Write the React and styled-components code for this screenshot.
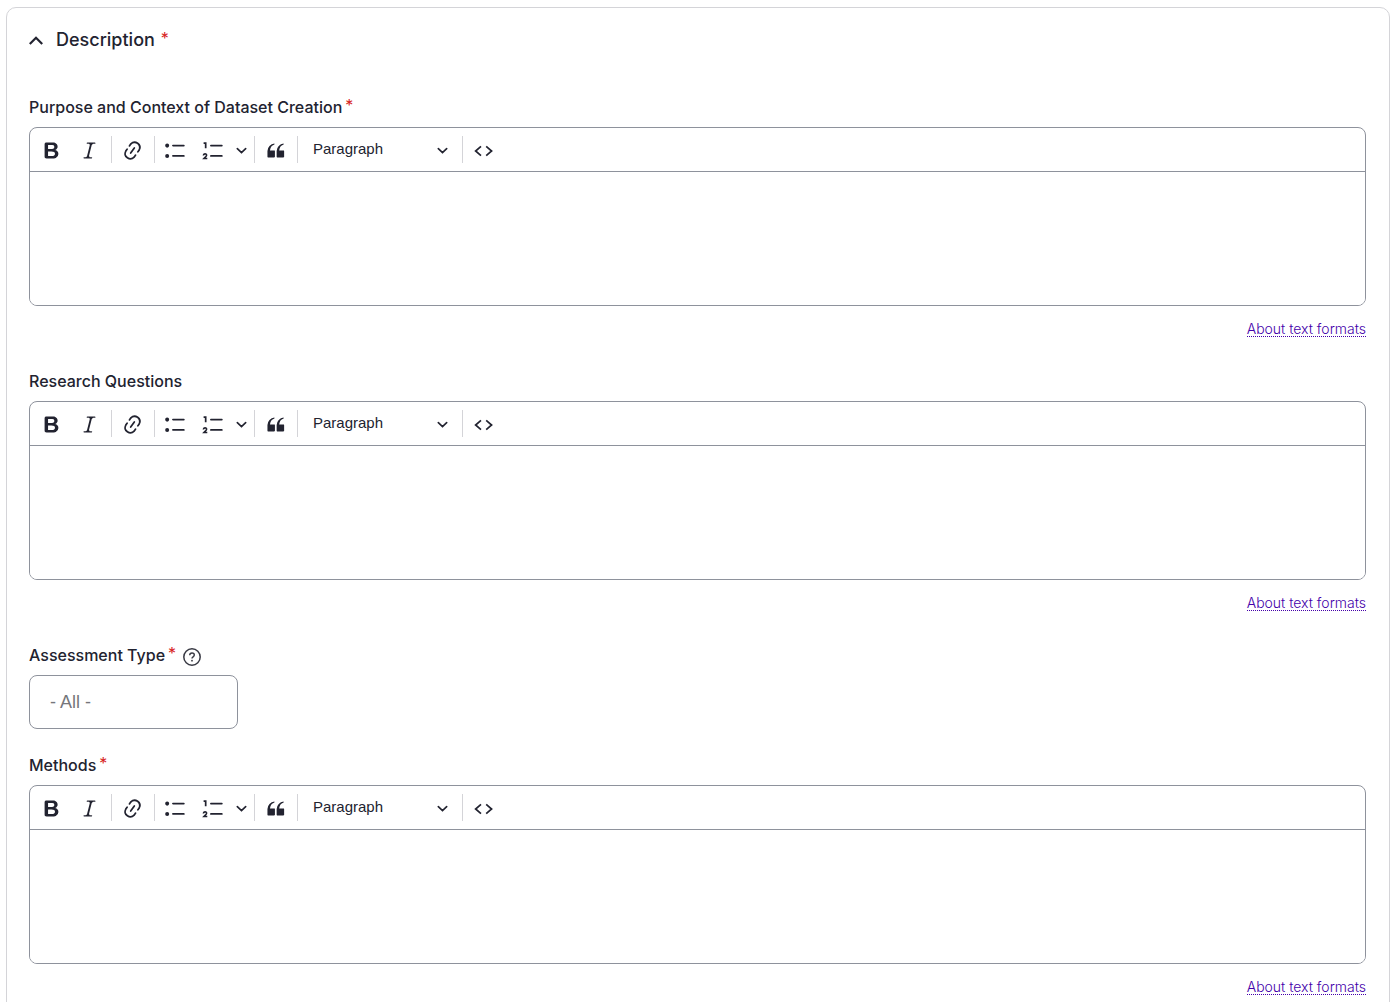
import React, { useId, useState } from "react";
import styled, { createGlobalStyle } from "styled-components";

const GlobalStyle = createGlobalStyle`
  * {
    box-sizing: border-box;
  }

  body {
    margin: 0;
    background-color: #fff;
    color: #222330;
    font-family: Inter, "Liberation Sans", sans-serif;
    font-size: 16px;
  }
`;

const Page = styled.main`
  padding: 7px 6px 24px;
`;

const Card = styled.section`
  border: 1px solid #d4d4d8;
  border-radius: 10px;
  padding: 20px 23px 24px 22px;
`;

const Summary = styled.button`
  display: flex;
  align-items: center;
  gap: 12px;
  padding: 0;
  border: 0;
  background: none;
  color: inherit;
  font-family: inherit;
  font-size: 18px;
  font-weight: 500;
  line-height: 24px;
  cursor: pointer;
`;

const Fields = styled.div`
  display: flex;
  flex-direction: column;
  gap: 24px;
  padding-top: 43px;
`;

const Field = styled.div`
  display: flex;
  flex-direction: column;
`;

const LabelRow = styled.div`
  display: flex;
  align-items: center;
  gap: 6px;
  height: 24px;
  margin-bottom: 8px;
`;

const Label = styled.label`
  font-weight: 500;
  line-height: 24px;
`;

const Required = styled.span`
  margin-left: ${(props) => (props.$wide ? "6px" : "3px")};
  color: #d72222;
  font-size: 16px;
  font-weight: 400;
  line-height: 16px;
  vertical-align: 2px;
`;

const HelpButton = styled.button`
  display: flex;
  padding: 4px 0 0;
  border: 0;
  background: none;
  color: #393a44;
`;

const EditorBox = styled.div`
  border: 1px solid #8e929c;
  border-radius: 8px;
  overflow: hidden;
`;

const Toolbar = styled.div`
  display: flex;
  align-items: center;
  height: 44px;
  padding: 0 2px;
  border-bottom: 1px solid #8e929c;
`;

const ToolButton = styled.button`
  display: flex;
  align-items: center;
  justify-content: center;
  width: ${(props) => (props.$narrow ? "19px" : "38px")};
  height: 38px;
  padding: 2px 0 0;
  border: 0;
  background: none;
  color: #222330;
`;

const Separator = styled.span`
  width: 1px;
  height: 27px;
  margin: 0 1px 0 3px;
  background-color: #d4d4d8;
`;

const StylePicker = styled.div`
  display: grid;
  align-items: center;
  width: 160px;

  select,
  svg {
    grid-area: 1 / 1;
  }

  svg {
    justify-self: end;
    margin: 2px 11px 0 0;
    pointer-events: none;
  }
`;

const StyleSelect = styled.select`
  appearance: none;
  height: 36px;
  padding: 0 32px 2px 14px;
  border: 0;
  background: none;
  color: #222330;
  font-family: "Liberation Sans", Arial, sans-serif;
  font-size: 15px;
`;

const TextArea = styled.textarea`
  display: block;
  width: 100%;
  height: 133px;
  padding: 12px 16px;
  border: 0;
  outline: 0;
  resize: none;
  color: inherit;
  font: inherit;
`;

const FormatLink = styled.a`
  align-self: flex-end;
  margin: 16px 0 8px;
  border-bottom: 1px dotted currentColor;
  color: #4400aa;
  font-size: 14px;
  font-weight: 300;
  line-height: 14px;
  text-decoration: none;
`;

const TypeInput = styled.input`
  width: 209px;
  height: 54px;
  padding: 0 20px;
  border: 1px solid #8e929c;
  border-radius: 8px;
  color: inherit;
  font-family: "Liberation Sans", Arial, sans-serif;
  font-size: 18px;

  &::placeholder {
    color: #75767b;
    opacity: 1;
  }
`;

const icons = {
  bold: "M10.187 17H5.773c-.637 0-1.092-.138-1.364-.415-.273-.277-.409-.718-.409-1.323V4.738c0-.617.14-1.062.419-1.332.279-.27.73-.406 1.354-.406h4.68c.69 0 1.288.041 1.793.124.506.083.96.242 1.36.478.341.197.644.447.906.75a3.262 3.262 0 0 1 .808 2.162c0 1.401-.722 2.426-2.167 3.075C15.05 10.175 16 11.315 16 13.01a3.756 3.756 0 0 1-2.296 3.504 6.1 6.1 0 0 1-1.517.377c-.571.073-1.238.11-2 .11zm-.217-6.217H7v4.087h3.069c1.977 0 2.965-.69 2.965-2.072 0-.707-.256-1.22-.768-1.537-.512-.319-1.277-.478-2.296-.478zM7 5.13v3.619h2.606c.729 0 1.292-.067 1.69-.2a1.6 1.6 0 0 0 .91-.765c.165-.267.247-.566.247-.897 0-.707-.26-1.176-.778-1.409-.519-.232-1.31-.348-2.375-.348H7z",
  italic:
    "m9.586 14.633.021.004c-.036.335.095.655.393.962.082.083.173.15.274.201h1.474a.6.6 0 1 1 0 1.2H5.304a.6.6 0 0 1 0-1.2h1.15c.474-.07.809-.182 1.005-.334.157-.122.291-.32.404-.597l2.416-9.55a1.053 1.053 0 0 0-.281-.823 1.12 1.12 0 0 0-.442-.296H8.15a.6.6 0 0 1 0-1.2h6.443a.6.6 0 1 1 0 1.2h-1.195c-.376.056-.65.155-.823.296-.215.175-.423.439-.623.79l-2.366 9.347z",
  link: "m11.077 15 .991-1.416a.75.75 0 1 1 1.229.86l-1.148 1.64a.748.748 0 0 1-.217.206 5.251 5.251 0 0 1-8.503-5.955.741.741 0 0 1 .12-.274l1.147-1.639a.75.75 0 1 1 1.228.86L4.933 10.7l.006.003a3.75 3.75 0 0 0 6.132 4.294l.006.004zm5.494-5.335a.748.748 0 0 1-.12.274l-1.147 1.639a.75.75 0 1 1-1.228-.86l.86-1.23a3.75 3.75 0 0 0-6.144-4.301l-.86 1.229a.75.75 0 0 1-1.229-.86l1.148-1.64a.748.748 0 0 1 .217-.206 5.251 5.251 0 0 1 8.503 5.955zm-4.563-2.532a.75.75 0 0 1 .184 1.045l-3.155 4.505a.75.75 0 1 1-1.229-.86l3.155-4.506a.75.75 0 0 1 1.045-.184z",
  bulleted:
    "M7 5.75c0 .414.336.75.75.75h9.5a.75.75 0 1 0 0-1.5h-9.5a.75.75 0 0 0-.75.75zM1 5.75a1.75 1.75 0 1 1 3.5 0 1.75 1.75 0 0 1-3.5 0zM7 14.75c0 .414.336.75.75.75h9.5a.75.75 0 1 0 0-1.5h-9.5a.75.75 0 0 0-.75.75zM1 14.75a1.75 1.75 0 1 1 3.5 0 1.75 1.75 0 0 1-3.5 0z",
  quote:
    "M3 10.423a6.5 6.5 0 0 1 6.056-6.408l.038.67C6.448 5.423 5.354 7.663 5.22 10H9c.552 0 .5.432.5.986v4.511c0 .554-.448.503-1 .503h-5c-.552 0-.5-.449-.5-1.003v-4.574zm8 0a6.5 6.5 0 0 1 6.056-6.408l.038.67c-2.646.739-3.74 2.979-3.873 5.315H17c.552 0 .5.432.5.986v4.511c0 .554-.448.503-1 .503h-5c-.552 0-.5-.449-.5-1.003v-4.574z",
};

const ToolIcon = ({ name }) => (
  <svg width="23" height="23" viewBox="0 0 20 20" aria-hidden="true">
    <path d={icons[name]} fill="currentColor" />
  </svg>
);

const NumberedIcon = () => (
  <svg width="23" height="23" viewBox="0 0 20 20" aria-hidden="true">
    <g fill="none" stroke="currentColor" strokeWidth="1.5">
      <path d="M7.75 5.75h9.5M7.75 14.75h9.5" strokeLinecap="round" />
      <path d="M1.4 3.6h1.8v4.4" />
      <path
        d="M1.2 14.3c0-1.8 2.8-1.8 2.8-.2 0 .8-.9 1.5-2.2 2.8h2.8"
        strokeWidth="1.4"
      />
    </g>
  </svg>
);

const Caret = () => (
  <svg width="11" height="11" viewBox="0 0 10 10" aria-hidden="true">
    <path
      d="M1.2 3.3 5 7l3.8-3.7"
      fill="none"
      stroke="currentColor"
      strokeWidth="1.5"
      strokeLinecap="round"
    />
  </svg>
);

const SourceIcon = () => (
  <svg width="20" height="20" viewBox="0 0 20 20" aria-hidden="true">
    <path
      d="M8 5.4 2.600 10 8 14.600M13.200 5.400l5.400 4.600-5.400 4.600"
      fill="none"
      stroke="currentColor"
      strokeWidth="1.7"
    />
  </svg>
);

const ChevronIcon = ({ open }) => (
  <svg width="15" height="24" viewBox="0 0 15 24" aria-hidden="true">
    <path
      d={open ? "M.8 16 7 9.8l6.2 6.2" : "M.8 9.8 7 16l6.2-6.2"}
      fill="none"
      stroke="currentColor"
      strokeWidth="2.2"
    />
  </svg>
);

const HelpIcon = () => (
  <svg width="20" height="20" viewBox="0 0 20 20" aria-hidden="true">
    <circle cx="10" cy="10" r="8.2" fill="none" stroke="currentColor" strokeWidth="1.5" />
    <path
      d="M7.7 8.2c0-1.3 1-2.2 2.3-2.2s2.3.9 2.3 2.1c0 1.7-2.3 1.7-2.3 3.3"
      fill="none"
      stroke="currentColor"
      strokeWidth="1.4"
    />
    <circle cx="10" cy="13.7" r=".9" fill="currentColor" />
  </svg>
);

const EditorField = ({ label, required }) => {
  const id = useId();

  return (
    <Field>
      <LabelRow>
        <Label htmlFor={id}>
          {label}
          {required && <Required>*</Required>}
        </Label>
      </LabelRow>
      <EditorBox>
        <Toolbar role="toolbar" aria-label="Editor toolbar">
          <ToolButton type="button" aria-label="Bold">
            <ToolIcon name="bold" />
          </ToolButton>
          <ToolButton type="button" aria-label="Italic">
            <ToolIcon name="italic" />
          </ToolButton>
          <Separator />
          <ToolButton type="button" aria-label="Link">
            <ToolIcon name="link" />
          </ToolButton>
          <Separator />
          <ToolButton type="button" aria-label="Bulleted List">
            <ToolIcon name="bulleted" />
          </ToolButton>
          <ToolButton type="button" aria-label="Numbered List">
            <NumberedIcon />
          </ToolButton>
          <ToolButton type="button" aria-label="List properties" $narrow>
            <Caret />
          </ToolButton>
          <Separator />
          <ToolButton type="button" aria-label="Block quote">
            <ToolIcon name="quote" />
          </ToolButton>
          <Separator />
          <StylePicker>
            <StyleSelect aria-label="Heading" defaultValue="Paragraph">
              <option>Paragraph</option>
            </StyleSelect>
            <Caret />
          </StylePicker>
          <Separator />
          <ToolButton type="button" aria-label="Source">
            <SourceIcon />
          </ToolButton>
        </Toolbar>
        <TextArea id={id} required={required} />
      </EditorBox>
      <FormatLink href="#formats">About text formats</FormatLink>
    </Field>
  );
};

const App = () => {
  const [open, setOpen] = useState(true);

  return (
    <Page>
      <GlobalStyle />
      <Card>
        <Summary
          type="button"
          aria-expanded={open}
          onClick={() => setOpen(!open)}
        >
          <ChevronIcon open={open} />
          <span>
            Description
            <Required $wide>*</Required>
          </span>
        </Summary>
        {open && (
          <Fields>
            <EditorField label="Purpose and Context of Dataset Creation" required />
            <EditorField label="Research Questions" />
            <Field>
              <LabelRow>
                <Label htmlFor="assessment-type">
                  Assessment Type
                  <Required>*</Required>
                </Label>
                <HelpButton type="button" aria-label="Help">
                  <HelpIcon />
                </HelpButton>
              </LabelRow>
              <TypeInput id="assessment-type" placeholder="- All -" />
            </Field>
            <EditorField label="Methods" required />
          </Fields>
        )}
      </Card>
    </Page>
  );
};

export default App;
